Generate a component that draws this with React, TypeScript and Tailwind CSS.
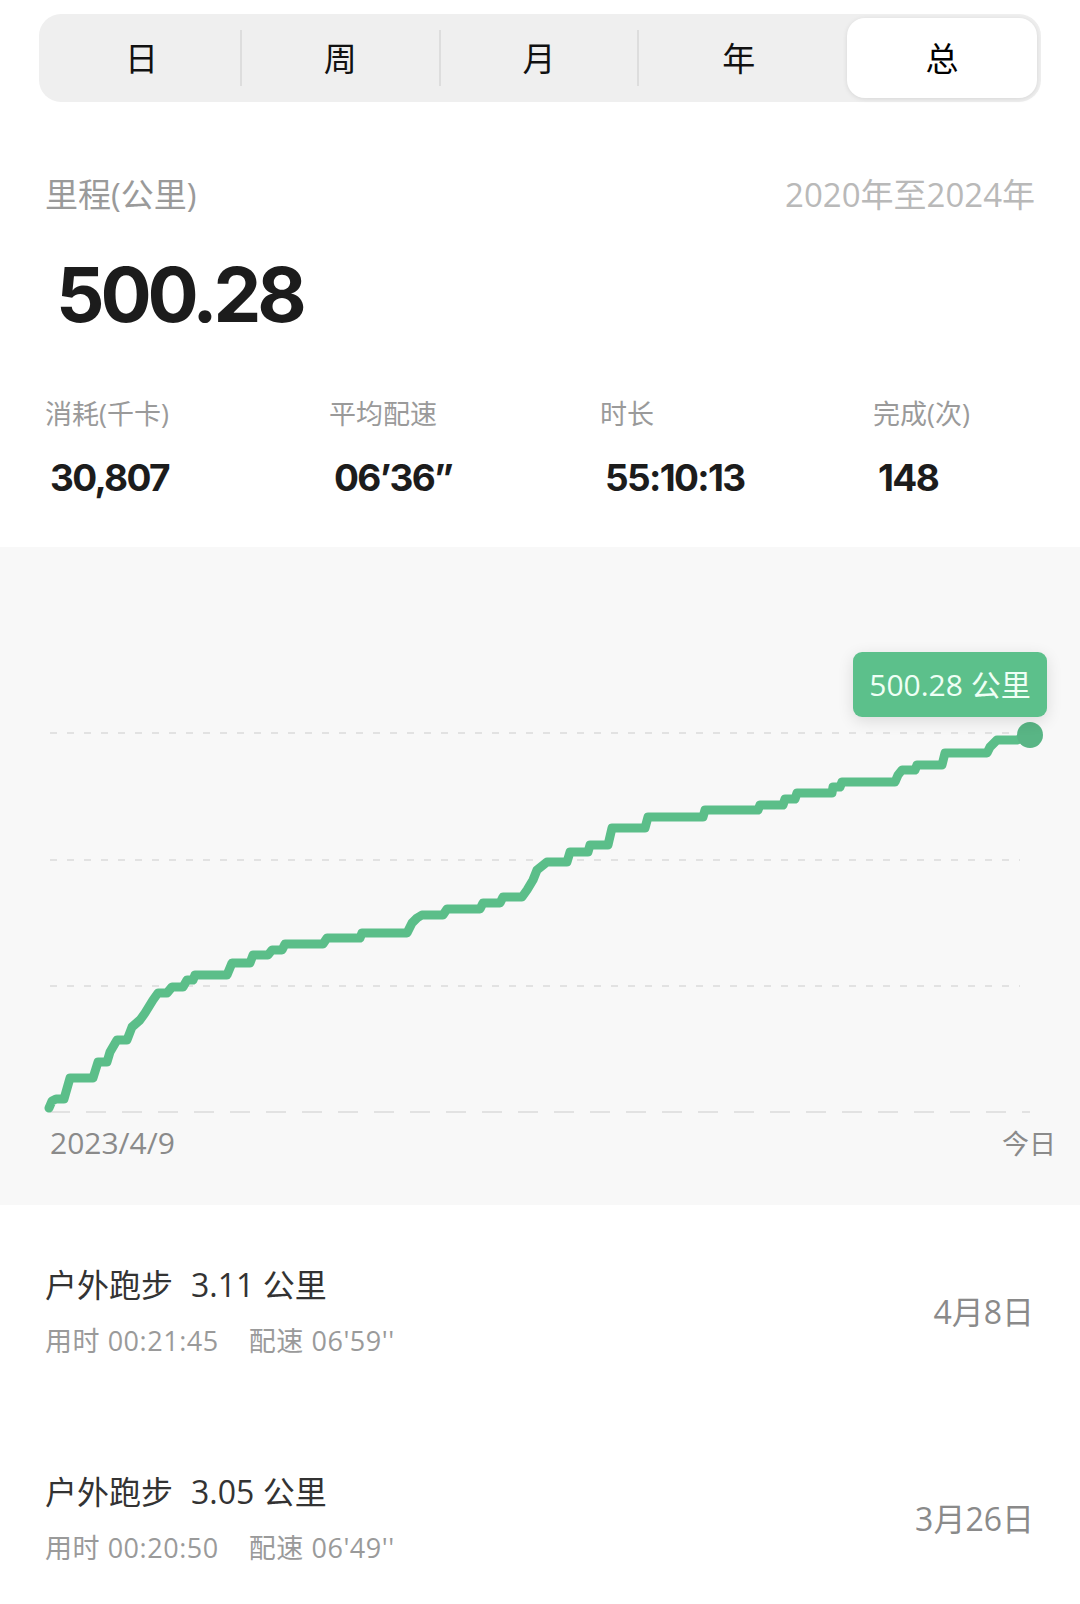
import React from 'react';

const tabs = ['日', '周', '月', '年', '总'];

const stats = [
  { label: '消耗(千卡)', value: '30,807', w: 'w-[284px]' },
  { label: '平均配速', value: '06\u201936\u201D', w: 'w-[271px]' },
  { label: '时长', value: '55:10:13', w: 'w-[273px]' },
  { label: '完成(次)', value: '148', w: 'flex-1' },
];

const runs = [
  { km: '3.11', time: '00:21:45', pace: "06'59''", date: '4月8日' },
  { km: '3.05', time: '00:20:50', pace: "06'49''", date: '3月26日' },
];

// cumulative distance line, page coordinates (y is shifted by the chart top)
const pts: [number, number][] = [
  [49, 1108], [52, 1101], [56, 1099], [64, 1099], [70, 1078], [93, 1078], [98, 1062], [107, 1062],
  [110, 1052], [117, 1040], [127, 1040], [132, 1027], [140, 1020], [145, 1013], [153, 1000], [158, 993],
  [167, 993], [172, 987], [183, 987], [187, 980], [193, 980], [195, 975], [227, 975], [232, 963],
  [250, 963], [253, 955], [268, 955], [272, 950], [282, 950], [285, 944], [323, 944], [327, 938],
  [360, 938], [362, 933], [407, 933], [412, 923], [417, 918], [422, 915], [443, 915], [447, 909],
  [480, 909], [483, 903], [500, 903], [503, 897], [522, 897], [527, 890], [533, 880], [537, 870],
  [547, 862], [567, 862], [570, 852], [588, 852], [590, 845], [608, 845], [612, 828], [645, 828],
  [648, 817], [703, 817], [705, 810], [758, 810], [760, 805], [783, 805], [785, 799], [795, 799],
  [797, 793], [832, 793], [833, 787], [840, 787], [842, 782], [895, 782], [898, 775], [902, 770],
  [915, 770], [917, 765], [942, 765], [945, 753], [987, 753], [990, 747], [997, 740], [1017, 740],
  [1030, 735],
];

const TOP = 547;

const Chart = () => {
  const line = pts.map(([x, y]) => `${x},${y - TOP}`).join(' ');
  return (
    <div className="relative mt-[51px] bg-[#f8f8f8] pb-[46px]">
      <svg width="1080" height="580" viewBox="0 0 1080 580" className="block">
        {[186, 313, 439].map((y) => (
          <line key={y} x1="50" x2="1020" y1={y} y2={y} stroke="#e2e2e2" strokeWidth="2" strokeDasharray="7 10" />
        ))}
        <line x1="50" x2="1030" y1="565" y2="565" stroke="#e2e2e2" strokeWidth="2" strokeDasharray="20 16" />
        <polyline points={line} fill="none" stroke="#5bbe89" strokeWidth="9" strokeLinejoin="round" strokeLinecap="round" />
        <circle cx="1030" cy={735 - TOP} r="13" fill="#59b585" />
      </svg>
      <div className="flex h-[32px] items-center justify-between pl-[50px] pr-[24px] text-[#8a8a8a]">
        <span className="text-[30px] leading-none">2023/4/9</span>
        <span className="text-[27px] leading-none">今日</span>
      </div>
      <div className="absolute left-[853px] top-[105px] flex h-[65px] w-[194px] items-center justify-center rounded-[9px] bg-[#5cc08b] text-[30px] leading-none text-[#effff5] shadow-[0_4px_16px_rgba(0,0,0,0.12)]">
        500.28 公里
      </div>
    </div>
  );
};

const App = () => {
  return (
    <div className="min-h-[1604px] bg-white font-['Open_Sans','Noto_Sans_CJK_SC',sans-serif]">
      {/* period tabs */}
      <div className="mx-[39px] grid h-[88px] translate-y-[14px] grid-cols-5 rounded-[22px] bg-[#efefef] p-[4px] font-['Noto_Sans_CJK_SC',sans-serif]">
        {tabs.map((t, i) =>
          i === 4 ? (
            <div key={t} className="ml-[9px] flex items-center justify-center rounded-[18px] bg-white text-[33px] text-black shadow-[0_1px_5px_rgba(0,0,0,0.10)]">
              {t}
            </div>
          ) : (
            <div key={t} className={`flex items-center justify-center text-[33px] text-[#111] ${i < 3 ? 'my-[12px] border-r-2 border-[#dddddd]' : ''}`}>
              {t}
            </div>
          )
        )}
      </div>

      {/* totals */}
      <div className="px-[45px] pt-[90px]">
        <div className="flex items-start justify-between text-[33px] leading-none">
          <span className="text-[#9a9a9a]">里程(公里)</span>
          <span className="text-[#b9b9b9]">2020年至2024年</span>
        </div>
        <div className="mt-[45px] pl-[11px] font-['Inter',sans-serif] text-[76px] font-bold leading-none tracking-[-0.055em] text-[#1c1c1c]">
          500.28
        </div>
        <div className="mt-[68px] flex">
          {stats.map((s) => (
            <div key={s.label} className={s.w}>
              <div className="text-[27px] leading-none text-[#9a9a9a]">{s.label}</div>
              <div className="mt-[32px] pl-[5px] font-['Inter',sans-serif] text-[37px] font-bold leading-none tracking-[-0.045em] text-[#1c1c1c]">
                {s.value}
              </div>
            </div>
          ))}
        </div>
      </div>

      <Chart />

      {/* recent runs */}
      <div className="flex flex-col gap-[122px] pl-[45px] pr-[46px] pt-[64px]">
        {runs.map((r) => (
          <div key={r.date} className="flex items-center justify-between">
            <div>
              <div className="text-[32px] leading-none text-[#333333]">
                <span>户外跑步</span>
                <span className="ml-[18px]">{r.km} 公里</span>
              </div>
              <div className="mt-[26px] text-[27px] leading-none tracking-[0.02em] text-[#9a9a9a]">
                <span>用时 {r.time}</span>
                <span className="ml-[30px]">配速 {r.pace}</span>
              </div>
            </div>
            <div className="text-[32px] leading-none text-[#8a8a8a]">{r.date}</div>
          </div>
        ))}
      </div>
    </div>
  );
};

export default App;
